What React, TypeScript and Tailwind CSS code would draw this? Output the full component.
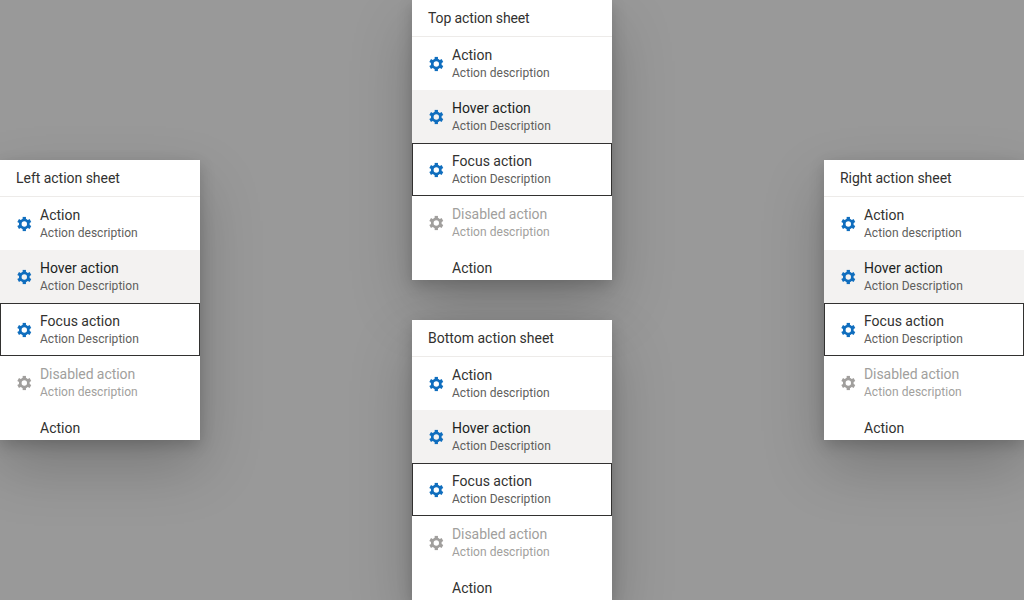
type Variant = 'normal' | 'hover' | 'focus' | 'disabled';

interface Action {
  title: string;
  description: string;
  variant: Variant;
}

const actions: Action[] = [
  { title: 'Action', description: 'Action description', variant: 'normal' },
  { title: 'Hover action', description: 'Action Description', variant: 'hover' },
  { title: 'Focus action', description: 'Action Description', variant: 'focus' },
  { title: 'Disabled action', description: 'Action description', variant: 'disabled' },
];

const rowStyles: Record<Variant, string> = {
  normal: 'text-[#323130]',
  hover: 'bg-[#f3f2f1] text-[#201f1e]',
  focus: 'text-[#323130] outline outline-1 -outline-offset-1 outline-[#323130]',
  disabled: 'text-[#a19f9d]',
};

const teeth = [0, 60, 120, 180, 240, 300];

function GearIcon() {
  return (
    <svg viewBox="0 0 16 16" className="size-4 shrink-0 fill-none stroke-current" aria-hidden="true">
      <circle cx="8.3" cy="8" r="4.05" strokeWidth="2.7" />
      {teeth.map((angle) => (
        <path key={angle} d="M8.3 .9v3" strokeWidth="3.3" transform={`rotate(${angle} 8.3 8)`} />
      ))}
    </svg>
  );
}

function ActionRow({ title, description, variant }: Action) {
  const disabled = variant === 'disabled';
  return (
    <li className={`flex items-center gap-2 px-4 py-2 ${rowStyles[variant]}`}>
      <span className={disabled ? 'text-[#a19f9d]' : 'text-[#106ebe]'}>
        <GearIcon />
      </span>
      <span className="flex flex-col">
        <span className={`leading-[20px] ${disabled ? 'tracking-[-0.07px]' : ''}`}>{title}</span>
        <span
          className={`text-[12px] leading-[17.14px] tracking-[0.04px] ${disabled ? '' : 'text-[#605e5c]'}`}
        >
          {description}
        </span>
      </span>
    </li>
  );
}

function ActionSheet({ title, tracking = '' }: { title: string; tracking?: string }) {
  return (
    <section className="h-[280px] w-[200px] shrink-0 overflow-hidden bg-white text-[14px] leading-[20px] text-[#323130] shadow-[0_4.8px_14.4px_rgba(0,0,0,0.18),0_25.6px_57.6px_rgba(0,0,0,0.22)]">
      <header className={`border-b border-[#edebe9] px-4 py-2 ${tracking}`}>{title}</header>
      <ul>
        {actions.map((action) => (
          <ActionRow key={action.title} {...action} />
        ))}
        <li className="flex items-center gap-2 px-4 py-2">
          <span className="size-4 shrink-0" />
          <span>Action</span>
        </li>
      </ul>
    </section>
  );
}

export default function App() {
  return (
    <main className="flex h-[600px] w-[1024px] items-center justify-between overflow-hidden bg-[#999999] font-['Roboto',sans-serif]">
      <ActionSheet title="Left action sheet" tracking="tracking-[-0.03px]" />
      <div className="flex h-full flex-col justify-between">
        <ActionSheet title="Top action sheet" tracking="tracking-[-0.12px]" />
        <ActionSheet title="Bottom action sheet" />
      </div>
      <ActionSheet title="Right action sheet" tracking="tracking-[-0.03px]" />
    </main>
  );
}
